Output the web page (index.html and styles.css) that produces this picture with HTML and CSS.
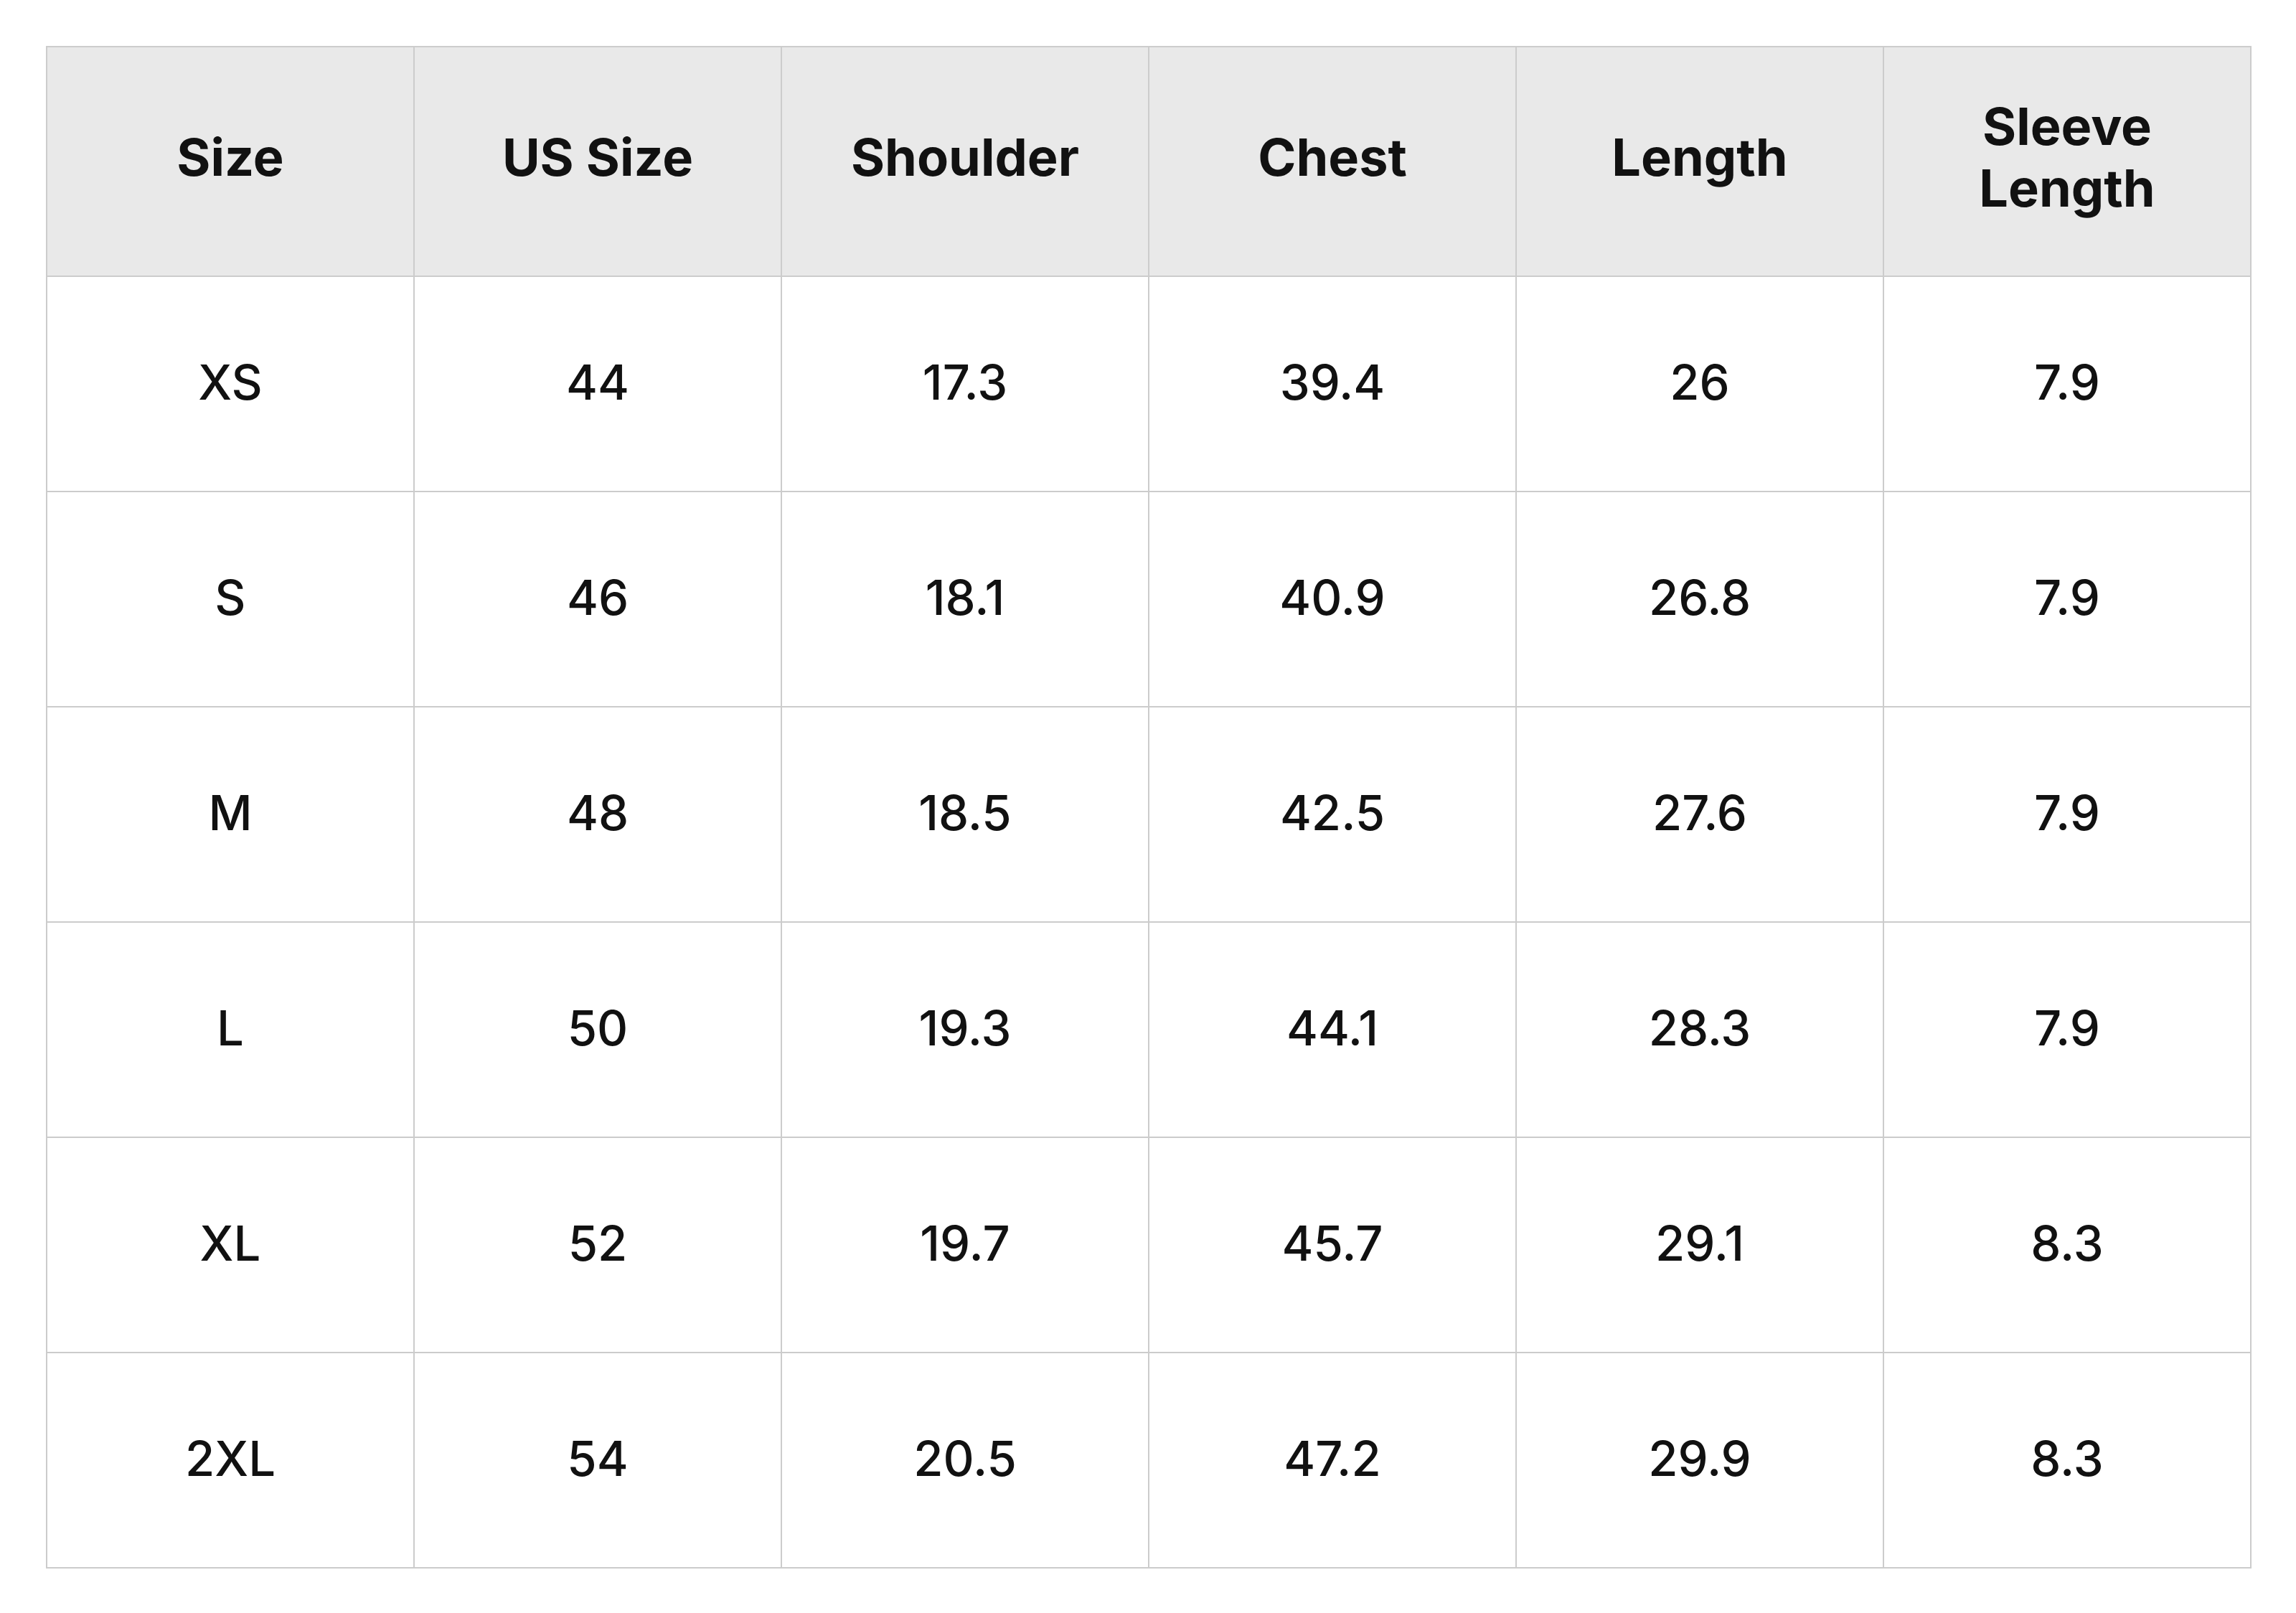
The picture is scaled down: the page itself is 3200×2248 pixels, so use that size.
FILE: index.html
```html
<!DOCTYPE html>
<html lang="en">
<head>
<meta charset="utf-8">
<title>Size Chart</title>
<link rel="stylesheet" href="styles.css">
</head>
<body>
<main class="page">
  <table class="size-table">
    <thead>
      <tr>
        <th>Size</th>
        <th>US Size</th>
        <th>Shoulder</th>
        <th>Chest</th>
        <th>Length</th>
        <th>Sleeve Length</th>
      </tr>
    </thead>
    <tbody>
      <tr><td>XS</td><td>44</td><td>17.3</td><td>39.4</td><td>26</td><td>7.9</td></tr>
      <tr><td>S</td><td>46</td><td>18.1</td><td>40.9</td><td>26.8</td><td>7.9</td></tr>
      <tr><td>M</td><td>48</td><td>18.5</td><td>42.5</td><td>27.6</td><td>7.9</td></tr>
      <tr><td>L</td><td>50</td><td>19.3</td><td>44.1</td><td>28.3</td><td>7.9</td></tr>
      <tr><td>XL</td><td>52</td><td>19.7</td><td>45.7</td><td>29.1</td><td>8.3</td></tr>
      <tr><td>2XL</td><td>54</td><td>20.5</td><td>47.2</td><td>29.9</td><td>8.3</td></tr>
    </tbody>
  </table>
</main>
</body>
</html>
```
FILE: styles.css
```css
html, body {
  margin: 0;
  padding: 0;
  background: #ffffff;
}

body {
  font-family: "Inter", "Liberation Sans", sans-serif;
  color: #111111;
}

.page {
  padding: 64px 63px 64px 64px;
}

.size-table {
  width: 3074px;
  border-collapse: collapse;
  table-layout: fixed;
}

.size-table th,
.size-table td {
  border: 2px solid #cccccc;
  text-align: center;
  vertical-align: middle;
  padding: 0 40px;
}

.size-table th {
  background: #e9e9e9;
  height: 306px;
  padding-bottom: 12px;
  font-size: 72px;
  font-weight: 700;
  line-height: 86px;
}

.size-table td {
  height: 292px;
  padding-bottom: 6px;
  font-size: 67px;
  font-weight: 500;
  line-height: 1;
}
```
